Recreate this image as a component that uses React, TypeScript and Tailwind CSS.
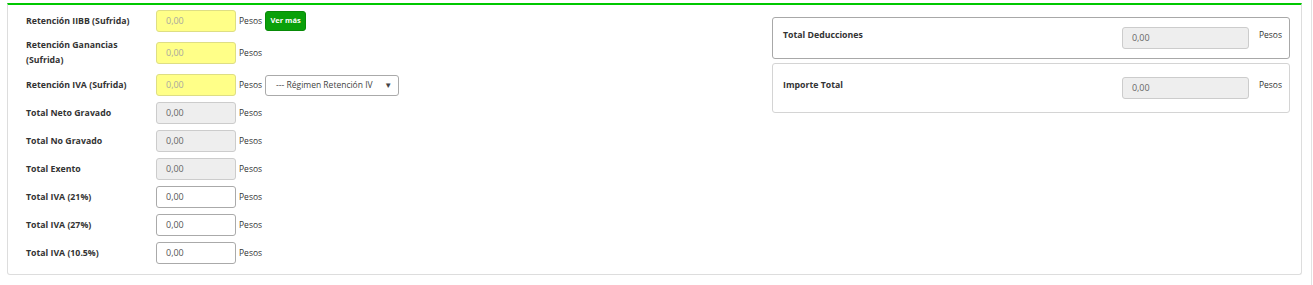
import React from "react";

const font = { fontFamily: '"Open Sans", "Liberation Sans", sans-serif' };

type Kind = "yellow" | "gray" | "white";

function Input({ kind, w = "w-[80px]" }: { kind: Kind; w?: string }) {
  const cls =
    kind === "yellow"
      ? "bg-[#ffff88] border-[#dede84] text-[#a8a8a0]"
      : kind === "gray"
      ? "bg-[#eeeeee] border-[#cccccc] text-[#666666]"
      : "bg-white border-[#aaaaaa] text-[#555555]";
  return (
    <div
      className={`${w} h-[22px] shrink-0 border rounded-[3px] flex items-center pl-[9px] text-[9px] ${cls}`}
    >
      0,00
    </div>
  );
}

function Row({
  label,
  kind,
  tall,
  extra,
}: {
  label: React.ReactNode;
  kind: Kind;
  tall?: boolean;
  extra?: React.ReactNode;
}) {
  return (
    <div className={`flex items-center ${tall ? "h-[30px]" : "h-[22px]"}`}>
      <div className="w-[130px] shrink-0 text-[8.75px] font-bold leading-[15px] text-[#333333]">
        {label}
      </div>
      <Input kind={kind} />
      <span className="ml-[3px] text-[8.5px] text-[#333333]">Pesos</span>
      {extra}
    </div>
  );
}

function RightBox({
  label,
  border,
  py,
}: {
  label: string;
  border: string;
  py: string;
}) {
  return (
    <div className={`border ${border} rounded-[3px] flex items-start pl-[10px] pr-[7px] ${py}`}>
      <div className="flex-1 text-[8.75px] font-bold text-[#333333] leading-[15px] mt-[1px]">
        {label}
      </div>
      <Input kind="gray" w="w-[127px]" />
      <span className="ml-[10px] text-[8.5px] text-[#333333] leading-[15px]">Pesos</span>
    </div>
  );
}

export default function App() {
  return (
    <div className="w-[1313px] h-[285px] bg-white flex pt-[3px]" style={font}>
      <div className="ml-[7px] w-[1295px] h-[272px] border border-[#dddddd] border-t-2 border-t-[#00c800] rounded-b-[3px] flex pt-[5px]">
        <div className="flex-1 flex flex-col gap-[6px] pl-[18px]">
          <Row
            label="Retención IIBB (Sufrida)"
            kind="yellow"
            extra={
              <div className="ml-[3px] w-[41px] h-[20px] rounded-[3px] bg-[#0aa00a] border border-[#088a08] flex items-center justify-center text-white text-[7.5px] font-bold">
                Ver más
              </div>
            }
          />
          <Row
            label={
              <>
                Retención Ganancias
                <br />
                (Sufrida)
              </>
            }
            kind="yellow"
            tall
          />
          <Row
            label="Retención IVA (Sufrida)"
            kind="yellow"
            extra={
              <div className="ml-[3px] w-[134px] h-[21px] rounded-[3px] bg-white border border-[#aaaaaa] flex items-center pl-[10px] pr-[6px] text-[8.5px] text-[#444444]">
                <span className="whitespace-nowrap">--- Régimen Retención IV</span>
                <span className="ml-auto text-[8px] text-[#444444]">▼</span>
              </div>
            }
          />
          <Row label="Total Neto Gravado" kind="gray" />
          <Row label="Total No Gravado" kind="gray" />
          <Row label="Total Exento" kind="gray" />
          <Row label="Total IVA (21%)" kind="white" />
          <Row label="Total IVA (27%)" kind="white" />
          <Row label="Total IVA (10.5%)" kind="white" />
        </div>
        <div className="w-[518px] mr-[11px] mt-[7px] flex flex-col gap-[4px]">
          <RightBox label="Total Deducciones" border="border-[#a8a8a8]" py="pt-[9px] pb-[9px]" />
          <RightBox label="Importe Total" border="border-[#d4d4d4]" py="pt-[13px] pb-[13px]" />
        </div>
      </div>
      <div className="ml-[9px] w-px h-[285px] mt-[-3px] bg-[#e2e2e2]" />
    </div>
  );
}
